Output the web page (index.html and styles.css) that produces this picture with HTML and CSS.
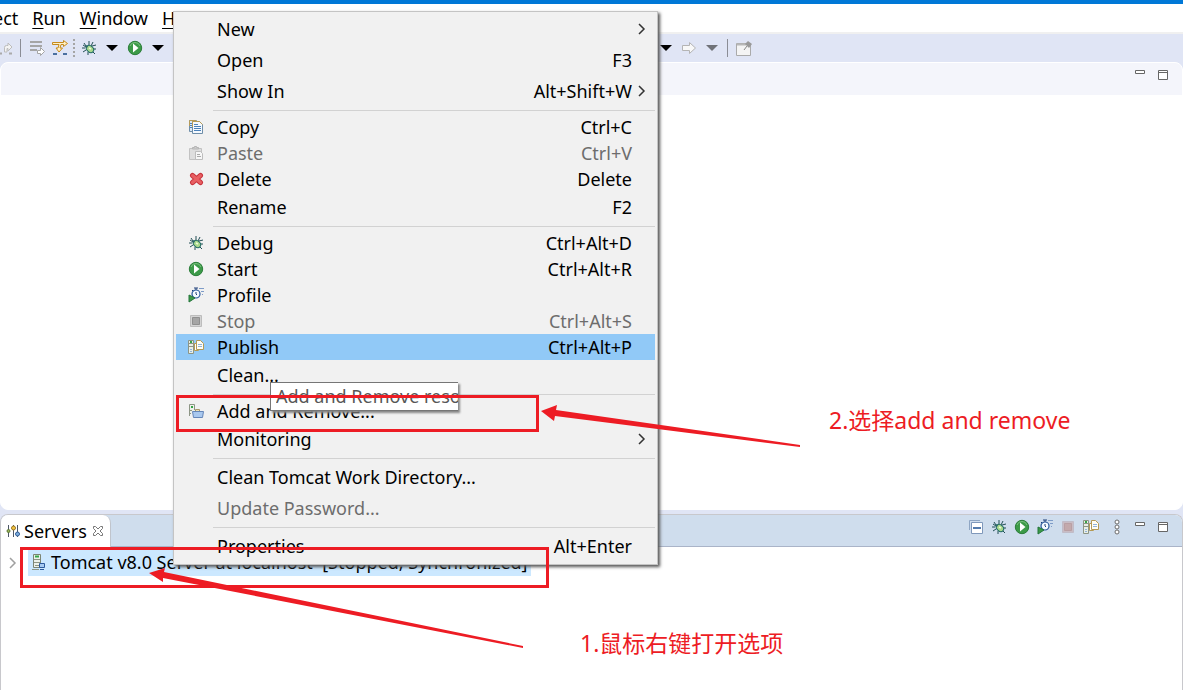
FILE: index.html
```html
<!DOCTYPE html>
<html lang="zh-CN">
<head>
  <meta charset="UTF-8">
  <meta name="viewport" content="width=device-width, initial-scale=1.0">
  <title>Servers</title>
  <link rel="stylesheet" href="styles.css">
</head>
<body>
  <!-- icon sprite -->
  <svg class="sprite" aria-hidden="true">
    <symbol id="i-bug" viewBox="0 0 16 16">
      <path d="M5 6L3 3M8 5V1M10 6l2-4M4 8H1M5 10l-3 2M7 12v3M11 6l4-1M12 9h3M12 12l2 2M2 5l3 2" fill="none" stroke="#234f55"/>
      <ellipse cx="9" cy="9" rx="4" ry="3" transform="rotate(40 9 9)" fill="#a9d98c" stroke="#1f6a62"/>
      <path d="M5 5l2 1-1 2-2-1z" fill="#2f6a6a"/>
      <path d="M8 8l2 1" stroke="#eefbd8" stroke-width="1.5"/>
    </symbol>
    <symbol id="i-run" viewBox="0 0 16 16">
      <circle cx="8" cy="8" r="6.7" fill="#3c9a48" stroke="#2b7d3a"/>
      <path d="M3 6a5.3 5.3 0 0 1 10 0" fill="none" stroke="#79c07d"/>
      <path d="M6 3.5v9L11.5 8z" fill="#fff"/>
    </symbol>
    <symbol id="i-profile" viewBox="0 0 16 16">
      <circle cx="8" cy="7" r="4" fill="#f4faff" stroke="#27579a" stroke-width="1.2"/>
      <path d="M6 1h4M8 1v2M4 3l1 1M8 5v2l1 1" fill="none" stroke="#1f3f78"/>
      <path d="M11 1.500h5M13 4.500h3M14 7.500h1" stroke="#7e9cc8"/>
      <path d="M1 8v7l6-4z" fill="#3c9a48" stroke="#23753a"/>
    </symbol>
    <symbol id="i-stop" viewBox="0 0 16 16">
      <path d="M2.500 2.500h11v11h-11z" fill="#d4d4d4" stroke="#bdbdbd"/>
      <path d="M4.500 4.500h7v7h-7z" fill="#a5a5a5" stroke="#8f8f8f"/>
    </symbol>
    <symbol id="i-stop-red" viewBox="0 0 16 16">
      <path d="M2.500 2.500h11v11h-11z" fill="#c9bcc4" stroke="#c0bcc8"/>
      <path d="M4.500 4.500h7v7h-7z" fill="#c3a9ac" stroke="#b99fa4"/>
    </symbol>
    <symbol id="i-publish" viewBox="0 0 16 16">
      <path d="M.500 1.500h5v13h-5z" fill="#e9eee6" stroke="#8d9585"/>
      <path d="M1 4.500h4M1 7.500h4" stroke="#8d9585"/>
      <path d="M2 2h2v2H2z" fill="#35a546"/>
      <path d="M6.500 4.500h4v7h-4z" fill="#fff" stroke="#b49a55"/>
      <path d="M8.500 1.500h4l3 3v6h-7z" fill="#fffdf5" stroke="#b49a55"/>
      <path d="M10 5.500h4M10 7.500h4M2 10.500h2M2 12.500h2" stroke="#8fb4dc"/>
    </symbol>
    <symbol id="i-copy" viewBox="0 0 16 16">
      <path d="M1.500 1.500h7v11h-7z" fill="#dce9f5" stroke="#6f8ea9"/>
      <path d="M1.500 7V1.500H8" fill="none" stroke="#b69b58"/>
      <path d="M4.500 2.500h7l3 3v9h-10z" fill="#f4f9fe" stroke="#6f8ea9"/>
      <path d="M4.500 8V2.500h7l3 3" fill="none" stroke="#b69b58"/>
      <path d="M6 5.500h4M6 7.500h7M6 9.500h7M6 11.500h7M2 4.500h2M2 6.500h2M2 8.500h2" stroke="#4c82bb"/>
    </symbol>
    <symbol id="i-paste" viewBox="0 0 16 16">
      <path d="M1.500 3.500h12v11h-12z" fill="#dedede" stroke="#c2c2c2"/>
      <path d="M4.500 4V2.500h2v-1h2v1h2V4z" fill="#d0d0d0" stroke="#b5b5b5"/>
      <path d="M7.500 6.500h5l2 2v6h-7z" fill="#f7f7f7" stroke="#bdbdbd"/>
      <path d="M9 9.500h3M9 11.500h4" stroke="#aaa"/>
    </symbol>
    <symbol id="i-delete" viewBox="0 0 16 16">
      <path d="M4.500 4.500l8 7M12.500 4.500l-8 7" stroke="#c8343d" stroke-width="5" stroke-linecap="round"/>
      <path d="M4.500 4.500l8 7M12.500 4.500l-8 7" stroke="#e85f62" stroke-width="3" stroke-linecap="round"/>
    </symbol>
    <symbol id="i-addremove" viewBox="0 0 16 16">
      <path d="M1.500 13V1.500h5V7" fill="#edf1ea" stroke="#8d9585"/>
      <path d="M3 3h2v2H3z" fill="#35a546"/>
      <path d="M2 7.500h2M2 10.500h1" stroke="#8d9585"/>
      <path d="M7.500 9V6.500h4V9" fill="#eee1b8" stroke="#a99a6a"/>
      <path d="M4.500 8.500h11l-1 6h-9z" fill="#a9c8ee" stroke="#6485b8"/>
    </symbol>
    <symbol id="i-servers" viewBox="0 0 16 16">
      <path d="M3.500 2v12M8.500 2v12M12.500 2v12" stroke="#4d5766"/>
      <circle cx="3.500" cy="8" r="1.500" fill="#9ab65c" stroke="#5d7632"/>
      <circle cx="8.500" cy="5" r="2" fill="#f4c542" stroke="#9a7620"/>
      <circle cx="12.500" cy="11" r="2" fill="#7daede" stroke="#2f5c98"/>
    </symbol>
    <symbol id="i-server" viewBox="0 0 16 16">
      <path d="M2.500.500h7v13h-7z" fill="#edf1ea" stroke="#7c8574"/>
      <path d="M4 2.500h4" stroke="#35a546" stroke-width="2"/>
      <path d="M3 5.500h6M3 8.500h6M4 11.500h4M1 15.500h7" stroke="#8d9585"/>
      <path d="M8.500 9.500h5v4h-5z" fill="#a8cbf2" stroke="#2e5b9c"/>
      <path d="M9 15.500h4" stroke="#2e5b9c"/>
    </symbol>
    <symbol id="i-collapse" viewBox="0 0 16 16">
      <path d="M1.500 11V1.500H12" fill="none" stroke="#8fa6c4"/>
      <path d="M3.500 3.500h11v11h-11z" fill="#fff" stroke="#7f98bb"/>
      <path d="M5 9h8" stroke="#1b4f92" stroke-width="1.500"/>
    </symbol>
    <symbol id="i-dots" viewBox="0 0 16 16">
      <g fill="#fff" stroke="#6c6c6c"><circle cx="8" cy="3" r="2"/><circle cx="8" cy="8" r="2"/><circle cx="8" cy="13" r="2"/></g>
    </symbol>
    <symbol id="i-min" viewBox="0 0 16 16">
      <path d="M3.500 3.500h9v3h-9z" fill="#fff" stroke="#666"/>
    </symbol>
    <symbol id="i-max" viewBox="0 0 16 16">
      <path d="M3.500 3.500h9v9h-9zM3 5.500h10" fill="#fff" stroke="#666"/>
    </symbol>
    <symbol id="i-close" viewBox="0 0 16 16">
      <path d="M3.500 3.500h2L8 6l2.500-2.500h2v2L10 8l2.500 2.500v2h-2L8 10l-2.500 2.500h-2v-2L6 8 3.500 5.500z" fill="#fff" stroke="#777"/>
    </symbol>
    <symbol id="i-caret" viewBox="0 0 16 16">
      <path d="M2 5h12l-6 6z" fill="currentColor"/>
    </symbol>
    <symbol id="i-chevron" viewBox="0 0 16 16">
      <path d="M5 3l5 5-5 5" fill="none" stroke="currentColor" stroke-width="1.500"/>
    </symbol>
    <symbol id="i-return" viewBox="0 0 16 16">
      <path d="M7.500 12V7.500a2 2 0 0 1 2-2H11V3l4 4-4 4V8.500h-1V12z" fill="#f3f3f3" stroke="#bcbcbc"/>
      <path d="M2 13.500h3M12 13.500h3" stroke="#aaa" stroke-width="2"/>
    </symbol>
    <symbol id="i-skip" viewBox="0 0 16 16">
      <path d="M1 2h12M1 6h12M1 10h7" stroke="#a5a5a5" stroke-width="2"/>
      <path d="M8.500 10.500h3v-3l4 4-4 4v-2h-3z" fill="#fff" stroke="#a5a5a5"/>
    </symbol>
    <symbol id="i-step" viewBox="0 0 16 16">
      <path d="M.500 2.500h11V.500l4 3-4 3v-2H9L8 8h2.500L7 12 4 8h2l1-3.500H.500z" fill="#fff0c4" stroke="#c68a1b"/>
      <path d="M1 14h4M11 14h4" stroke="#4a70a0" stroke-width="2"/>
    </symbol>
    <symbol id="i-forward" viewBox="0 0 16 16">
      <path d="M1.500 5.500h7v-3L14.500 8l-6 5.500v-3h-7z" fill="#f8f8f8" stroke="#b4b4b4"/>
    </symbol>
    <symbol id="i-pin" viewBox="0 0 16 16">
      <path d="M.500 3.500h14v12H.500z" fill="#f4f4f4" stroke="#aaa"/>
      <path d="M1 4.500h9" stroke="#b8b8b8" stroke-width="2"/>
      <path d="M8 10l3-4" stroke="#888"/>
      <path d="M9 4l3-3 4 3-3 4z" fill="#999"/>
    </symbol>
  </svg>

  <div class="workbench">
    <nav class="menubar">
      <a href="#">ect</a>
      <a href="#"><u>R</u>un</a>
      <a href="#"><u>W</u>indow</a>
      <a href="#"><u>H</u>elp</a>
    </nav>

    <div class="toolbar">
      <button aria-label="Step return"><svg><use href="#i-return"/></svg></button>
      <span class="divider"></span>
      <button aria-label="Skip"><svg><use href="#i-skip"/></svg></button>
      <button aria-label="Step filters"><svg><use href="#i-step"/></svg></button>
      <span class="divider dotted"></span>
      <button aria-label="Debug"><svg><use href="#i-bug"/></svg></button>
      <button aria-label="Debug options"><svg><use href="#i-caret"/></svg></button>
      <button aria-label="Run"><svg><use href="#i-run"/></svg></button>
      <button aria-label="Run options"><svg><use href="#i-caret"/></svg></button>
      <span class="toolbar-gap"></span>
      <button aria-label="Back history"><svg><use href="#i-caret"/></svg></button>
      <button aria-label="Forward"><svg><use href="#i-forward"/></svg></button>
      <button aria-label="Forward history" class="dim"><svg><use href="#i-caret"/></svg></button>
      <span class="divider"></span>
      <button aria-label="Pin editor"><svg><use href="#i-pin"/></svg></button>
    </div>

    <main class="editor">
      <div class="editor-tabs">
        <button aria-label="Minimize"><svg><use href="#i-min"/></svg></button>
        <button aria-label="Maximize"><svg><use href="#i-max"/></svg></button>
      </div>
    </main>

    <section class="view">
      <div class="view-header">
        <div class="tab">
          <svg><use href="#i-servers"/></svg>
          <span>Servers</span>
          <button aria-label="Close"><svg><use href="#i-close"/></svg></button>
        </div>
        <div class="view-tools">
          <button aria-label="Collapse all"><svg><use href="#i-collapse"/></svg></button>
          <button aria-label="Debug"><svg><use href="#i-bug"/></svg></button>
          <button aria-label="Start"><svg><use href="#i-run"/></svg></button>
          <button aria-label="Profile"><svg><use href="#i-profile"/></svg></button>
          <button aria-label="Stop"><svg><use href="#i-stop-red"/></svg></button>
          <button aria-label="Publish"><svg><use href="#i-publish"/></svg></button>
          <button aria-label="View menu" class="more"><svg><use href="#i-dots"/></svg></button>
          <button aria-label="Minimize"><svg><use href="#i-min"/></svg></button>
          <button aria-label="Maximize"><svg><use href="#i-max"/></svg></button>
        </div>
      </div>
      <div class="tree">
        <button class="expander" aria-label="Expand"><svg><use href="#i-chevron"/></svg></button>
        <div class="tree-item">
          <svg><use href="#i-server"/></svg>
          <span>Tomcat v8.0 Server at localhost&nbsp; [Stopped, Synchronized]</span>
        </div>
      </div>
    </section>
  </div>

  <div class="context-menu" role="menu">
    <button role="menuitem" class="tall"><span>New</span><svg class="arrow"><use href="#i-chevron"/></svg></button>
    <button role="menuitem" class="tall"><span>Open</span><kbd>F3</kbd></button>
    <button role="menuitem" class="tall"><span>Show In</span><kbd>Alt+Shift+W</kbd><svg class="arrow"><use href="#i-chevron"/></svg></button>
    <hr>
    <button role="menuitem"><svg><use href="#i-copy"/></svg><span>Copy</span><kbd>Ctrl+C</kbd></button>
    <button role="menuitem" disabled><svg><use href="#i-paste"/></svg><span>Paste</span><kbd>Ctrl+V</kbd></button>
    <button role="menuitem"><svg><use href="#i-delete"/></svg><span>Delete</span><kbd>Delete</kbd></button>
    <button role="menuitem" class="tall"><span>Rename</span><kbd>F2</kbd></button>
    <hr>
    <button role="menuitem"><svg><use href="#i-bug"/></svg><span>Debug</span><kbd>Ctrl+Alt+D</kbd></button>
    <button role="menuitem"><svg><use href="#i-run"/></svg><span>Start</span><kbd>Ctrl+Alt+R</kbd></button>
    <button role="menuitem"><svg><use href="#i-profile"/></svg><span>Profile</span></button>
    <button role="menuitem" disabled><svg><use href="#i-stop"/></svg><span>Stop</span><kbd>Ctrl+Alt+S</kbd></button>
    <button role="menuitem" class="selected"><svg><use href="#i-publish"/></svg><span>Publish</span><kbd>Ctrl+Alt+P</kbd></button>
    <button role="menuitem" class="tall"><span>Clean...</span></button>
    <hr>
    <button role="menuitem"><svg><use href="#i-addremove"/></svg><span>Add and Remove...</span></button>
    <button role="menuitem" class="tall"><span>Monitoring</span><svg class="arrow"><use href="#i-chevron"/></svg></button>
    <hr>
    <button role="menuitem" class="tall"><span>Clean Tomcat Work Directory...</span></button>
    <button role="menuitem" class="tall" disabled><span>Update Password...</span></button>
    <hr>
    <button role="menuitem" class="tall"><span>Properties</span><kbd>Alt+Enter</kbd></button>
  </div>

  <div class="tooltip" role="tooltip"><span>Add and Remove resources</span></div>

  <!-- red notes drawn over the window -->
  <div class="mark mark-menu"></div>
  <div class="mark mark-server"></div>
  <svg class="arrows" aria-hidden="true">
    <path d="M541 411l16-6-1 5 244 35v2L555 416l-1 5z"/>
    <path d="M149 573l16-5-1 4 359 74v2L163 578v4z"/>
  </svg>
  <p class="note note-menu">2.选择add and remove</p>
  <p class="note note-server">1.鼠标右键打开选项</p>
</body>
</html>
```
FILE: styles.css
```css
* {
  box-sizing: border-box;
}
body {
  margin: 0;
  font-family: "Noto Sans", "Noto Sans CJK SC", sans-serif;
  font-size: 18px;
  line-height: 26px;
  color: #000;
  overflow: hidden;
}
button {
  padding: 0;
  border: none;
  background: none;
  font: inherit;
  color: inherit;
}
svg {
  display: block;
  width: 16px;
  height: 16px;
  flex-shrink: 0;
}
.sprite {
  position: absolute;
  width: 0;
  height: 0;
}
.workbench {
  display: flex;
  flex-direction: column;
  height: 100vh;
  border-top: 4px solid #0078d7;
  background: #e0e5f5;
}

/* menu bar */
.menubar {
  display: flex;
  align-items: center;
  gap: 14px;
  height: 28px;
  background: #fff;
}
.menubar a {
  color: #000;
  text-decoration: none;
}
.menubar a:first-child {
  margin-left: -7px;
}
.menubar u {
  text-underline-offset: 3px;
}

/* toolbar */
.toolbar {
  display: flex;
  align-items: center;
  gap: 7px;
  height: 30px;
  border-top: 2px solid #f0f0f0;
}
.toolbar button:first-child {
  margin-left: -3px;
}
.toolbar .divider {
  width: 1px;
  height: 18px;
  margin-right: 1px;
  background: #8b8d95;
}
.toolbar .dotted {
  margin: 0 -1px 0 -2px;
  background: none;
  border-left: 2px dotted #a5a5a5;
}
.toolbar-gap {
  width: 478px;
}
.dim {
  color: #707278;
}

/* editor area */
.editor {
  flex: 1;
  margin-bottom: 4px;
  background: #fff;
  border: 1px solid #fff;
  border-radius: 8px;
  overflow: hidden;
}
.editor-tabs {
  display: flex;
  align-items: flex-start;
  justify-content: flex-end;
  gap: 7px;
  height: 32px;
  padding: 4px 11px;
  background: #f4f5fb;
}

/* servers view */
.view {
  height: 176px;
  background: #fff;
  border: 1px solid #c8c8cc;
  border-bottom: none;
  border-radius: 8px 8px 0 0;
  overflow: hidden;
}
.view-header {
  display: flex;
  justify-content: space-between;
  height: 32px;
  background: #cfdded;
  border-bottom: 1px solid #aab4c8;
}
.tab {
  display: flex;
  align-items: center;
  gap: 3px;
  height: 32px;
  padding: 2px 4px;
  background: #fff;
  border-right: 1px solid #c0c4cc;
  border-radius: 0 8px 0 0;
}
.view-tools {
  display: flex;
  align-items: flex-start;
  gap: 7px;
  padding: 4px 11px;
}
.view-tools .more {
  margin-left: 3px;
}
.tree {
  display: flex;
  align-items: center;
  padding-top: 3px;
}
.expander {
  width: 27px;
  padding-left: 4px;
  color: #a0a0a0;
}
.tree-item {
  display: flex;
  align-items: center;
  gap: 4px;
  height: 26px;
  padding: 0 3px 2px;
  background: #cce8ff;
  white-space: nowrap;
}

/* context menu */
.context-menu {
  position: absolute;
  left: 173px;
  top: 11px;
  width: 485px;
  padding: 2px;
  background: #f1f1f1;
  border: 1px solid #c4c4c4;
  box-shadow: 2px 2px 3px #555;
}
.context-menu button {
  display: grid;
  grid-template-columns: 29px 1fr auto 23px;
  align-items: center;
  width: 100%;
  height: 26px;
  padding-left: 12px;
  text-align: left;
  line-height: 26px;
}
.context-menu .tall {
  height: 31px;
  padding-bottom: 2px;
}
.context-menu span {
  grid-column: 2;
  grid-row: 1;
}
.context-menu kbd {
  grid-column: 3;
  grid-row: 1;
  font: inherit;
}
.context-menu svg {
  grid-row: 1;
}
.context-menu .arrow {
  grid-column: 4;
  margin-left: 2px;
  color: #333;
}
.context-menu button:disabled {
  color: #6d6d6d;
}
.context-menu .selected {
  background: #91c9f7;
}
.context-menu hr {
  height: 1px;
  margin: 3px 0 3px 37px;
  border: none;
  background: #d2d2d2;
}
.tooltip {
  position: absolute;
  left: 270px;
  top: 382px;
  width: 188px;
  height: 29px;
  padding-left: 5px;
  background: #fff;
  border: 1px solid #767676;
  border-right: none;
  color: #575757;
  box-shadow: 2px 2px 2px #888;
}
.tooltip span {
  display: block;
  overflow: hidden;
  white-space: nowrap;
}

/* annotations */
.mark {
  position: absolute;
  border: 3px solid #ed1c24;
}
.mark-menu {
  left: 176px;
  top: 395px;
  width: 363px;
  height: 37px;
}
.mark-server {
  left: 20px;
  top: 547px;
  width: 529px;
  height: 41px;
}
.arrows {
  position: absolute;
  left: 0;
  top: 0;
  width: 100%;
  height: 100%;
  fill: #ed1c24;
  pointer-events: none;
}
.note {
  position: absolute;
  margin: 0;
  color: #ed1c24;
  font-size: 23px;
  line-height: 32px;
  white-space: nowrap;
}
.note-menu {
  left: 829px;
  top: 404px;
}
.note-server {
  left: 580px;
  top: 627px;
}
```
